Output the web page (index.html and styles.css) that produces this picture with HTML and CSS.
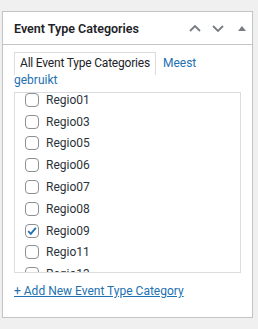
FILE: index.html
```html
<!DOCTYPE html>
<html lang="nl">
<head>
<meta charset="utf-8">
<link rel="stylesheet" href="styles.css">
</head>
<body>
<div class="postbox">
  <div class="postbox-header">
    <h2 class="postbox-title">Event Type Categories</h2>
    <div class="handle-actions">
      <span class="handle-btn handle-up"><svg width="12" height="7" viewBox="0 0 12 7"><polyline points="1,6 6,1 11,6" fill="none" stroke="#787c82" stroke-width="1.8"/></svg></span>
      <span class="handle-btn handle-down"><svg width="12" height="7" viewBox="0 0 12 7"><polyline points="1,1 6,6 11,1" fill="none" stroke="#787c82" stroke-width="1.8"/></svg></span>
      <span class="handle-btn handle-toggle"><svg width="8" height="5" viewBox="0 0 8 5"><polygon points="0,5 4,0 8,5" fill="#787c82"/></svg></span>
    </div>
  </div>
  <div class="inside">
    <div class="category-tabs"><span class="tab-active">All Event Type Categories</span> <a class="tab-link" href="#">Meest<br>gebruikt</a></div>
    <div class="tabs-panel">
      <ul class="checklist">
        <li class="item"><span class="checkbox"></span><span class="label">Regio01</span></li>
        <li class="item"><span class="checkbox"></span><span class="label">Regio03</span></li>
        <li class="item"><span class="checkbox"></span><span class="label">Regio05</span></li>
        <li class="item"><span class="checkbox"></span><span class="label">Regio06</span></li>
        <li class="item"><span class="checkbox"></span><span class="label">Regio07</span></li>
        <li class="item"><span class="checkbox"></span><span class="label">Regio08</span></li>
        <li class="item"><span class="checkbox checked"><svg width="12" height="12" viewBox="0 0 12 12"><polyline points="2.2,6.2 4.8,8.8 9.8,2.8" fill="none" stroke="#2271b1" stroke-width="1.9"/></svg></span><span class="label">Regio09</span></li>
        <li class="item"><span class="checkbox"></span><span class="label">Regio11</span></li>
        <li class="item"><span class="checkbox"></span><span class="label">Regio13</span></li>
      </ul>
    </div>
    <a class="add-link" href="#">+ Add New Event Type Category</a>
  </div>
</div>
</body>
</html>
```
FILE: styles.css
```css
html, body {
  margin: 0;
  padding: 0;
  background: #f0f0f1;
}
body {
  font-family: Roboto, "Liberation Sans", sans-serif;
  font-size: 12px;
  color: #1d2327;
}
.postbox {
  box-sizing: border-box;
  width: 251px;
  margin: 11px 0 0 2px;
  background: #fff;
  border: 1px solid #c3c4c7;
  box-shadow: 0 1px 1px rgba(0,0,0,0.04);
}
.postbox-header {
  display: flex;
  align-items: center;
  height: 32px;
  padding-left: 11px;
  border-bottom: 1px solid #c3c4c7;
}
.postbox-title {
  flex: 1;
  margin: 0;
  font-size: 12.5px;
  font-weight: 600;
  line-height: 17px;
  color: #1d2327;
}
.handle-actions {
  display: flex;
  align-items: center;
  padding-right: 5px;
}
.handle-btn {
  display: flex;
  align-items: center;
  justify-content: center;
  width: 16px;
  height: 20px;
}
.handle-down {
  margin-left: 7px;
}
.handle-toggle {
  width: 10px;
  margin-left: 11px;
}
.inside {
  padding: 0 11px 17px 11px;
}
.category-tabs {
  margin: 10px 0 3px;
  line-height: 17px;
  font-size: 12px;
}
.tab-active {
  padding: 3px 5px 5px;
  border: 1px solid #dcdcde;
  border-bottom: none;
  background: #fff;
  color: #1d2327;
  letter-spacing: -0.2px;
}
.tab-link {
  margin-left: 4px;
  color: #2271b1;
  text-decoration: none;
}
.tabs-panel {
  box-sizing: border-box;
  height: 181px;
  overflow: hidden;
  border: 1px solid #dcdcde;
  background: #fff;
  padding-left: 10px;
}
.checklist {
  list-style: none;
  margin: -4px 0 0;
  padding: 0;
}
.item {
  display: flex;
  align-items: center;
  height: 21.8px;
}
.checkbox {
  box-sizing: border-box;
  display: flex;
  align-items: center;
  justify-content: center;
  width: 14px;
  height: 14px;
  margin-right: 7px;
  border: 1px solid #8c8f94;
  border-radius: 4px;
  background: #fff;
}
.label {
  font-size: 12px;
  color: #2c3338;
}
.add-link {
  display: block;
  margin-top: 10px;
  line-height: 17px;
  font-size: 12px;
  color: #2271b1;
  text-decoration: underline;
}
```
